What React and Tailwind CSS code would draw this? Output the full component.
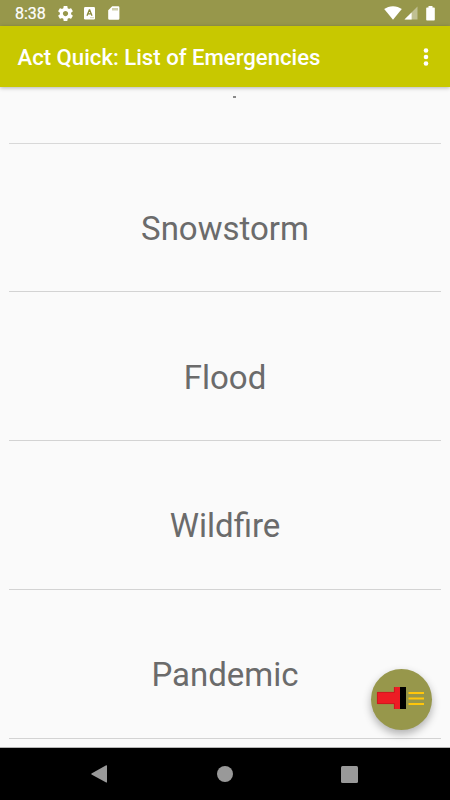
import React from 'react';

const emergencies = ['Snowstorm', 'Flood', 'Wildfire', 'Pandemic'];

const StatusBar = () => (
  <div className="h-[26px] shrink-0 bg-[#97974b] flex items-center text-white">
    <span className="w-[43px] ml-[15px] text-[16px] leading-[26px] pt-[2px] [-webkit-text-stroke:0.2px_white]">8:38</span>
    <svg width="15" height="15" viewBox="2 2 20 20" fill="currentColor">
      <path d="M19.43 12.98c.04-.32.07-.64.07-.98s-.03-.66-.07-.98l2.11-1.65c.19-.15.24-.42.12-.64l-2-3.46c-.12-.22-.39-.3-.61-.22l-2.49 1c-.52-.4-1.08-.73-1.69-.98l-.38-2.65C14.46 2.18 14.25 2 14 2h-4c-.25 0-.46.18-.49.42l-.38 2.65c-.61.25-1.17.59-1.69.98l-2.49-1c-.23-.09-.49 0-.61.22l-2 3.46c-.13.22-.07.49.12.64l2.11 1.65c-.04.32-.07.65-.07.98s.03.66.07.98l-2.11 1.65c-.19.15-.24.42-.12.64l2 3.46c.12.22.39.3.61.22l2.49-1c.52.4 1.08.73 1.69.98l.38 2.65c.03.24.24.42.49.42h4c.25 0 .46-.18.49-.42l.38-2.65c.61-.25 1.17-.59 1.69-.98l2.49 1c.23.09.49 0 .61-.22l2-3.46c.12-.22.07-.49-.12-.64l-2.11-1.65zM12 15.5c-1.93 0-3.5-1.57-3.5-3.5s1.57-3.5 3.5-3.5 3.5 1.57 3.5 3.5-1.57 3.5-3.5 3.5z" />
    </svg>
    <svg width="11" height="13" viewBox="0 0 11 13" className="ml-[11px] mt-px">
      <rect width="11" height="12.5" rx="1.2" fill="white" />
      <path d="M3 8.7 5.3 3h.4L8 8.7M3.9 6.8h3.2" fill="none" stroke="#8b8b3d" strokeWidth="1.3" />
      <path d="M6.5 10.7h1M8.5 10.7h1" stroke="#97974b" strokeWidth="0.8" />
    </svg>
    <svg width="12" height="14" viewBox="0 0 12 14" className="ml-[13px]">
      <path d="M4.2.3h6A1.2 1.2 0 0 1 11.4 1.5v11a1.2 1.2 0 0 1-1.2 1.2H1.4A1.2 1.2 0 0 1 .2 12.5V4.3z" fill="white" />
      <path d="M5 2v2.5M7 2v2.5M9 2v2.5" stroke="#97974b" strokeWidth="0.9" />
    </svg>
    <svg width="18" height="14" viewBox="0 0 18 14" className="ml-auto">
      <path d="M9 13.7.2 3.1C2.6 1.2 5.7.2 9 .2s6.4 1 8.8 2.9z" fill="white" />
    </svg>
    <svg width="14" height="14" viewBox="0 0 14 14" className="ml-[2px]">
      <path d="M13.5.5v13H.5z" fill="white" fillOpacity="0.4" />
      <path d="M7.6 6.4v7.1H.5z" fill="white" />
    </svg>
    <svg width="9" height="15" viewBox="0 0 9 15" className="ml-[8px] mr-[15px]">
      <path d="M2.5 0h4v1.5H8a.8.8 0 0 1 .8.8v11.4a.8.8 0 0 1-.8.8H1a.8.8 0 0 1-.8-.8V2.3A.8.8 0 0 1 1 1.5h1.5z" fill="white" />
    </svg>
  </div>
);

const AppBar = () => (
  <div className="relative z-10 h-[61px] shrink-0 bg-[#c8c800] flex items-center justify-between pl-[17.5px] pr-[21px] text-white shadow-[0_1px_4px_rgba(0,0,0,0.28)]">
    <h1 className="text-[22.15px] font-medium leading-none whitespace-nowrap pt-[2px]">
      Act Quick: List of Emergencies
    </h1>
    <svg width="6" height="20" viewBox="0 0 6 20" fill="currentColor">
      <circle cx="3" cy="3.5" r="2.3" />
      <circle cx="3" cy="10" r="2.3" />
      <circle cx="3" cy="16.5" r="2.3" />
    </svg>
  </div>
);

const FlashlightButton = () => (
  <button className="absolute right-[18px] bottom-[17px] w-[61px] h-[61px] rounded-full bg-[#97974b] flex items-center justify-center shadow-[0_4px_9px_rgba(0,0,0,0.3)]">
    <svg width="49" height="24" viewBox="0 0 49 24" className="-ml-[2px] -mt-[3px]">
      <path d="M1 6h17V1h6v22h-6v-5H1z" fill="#ed1c24" />
      <path d="M1.4 6.4H18.4V1M1.4 6.4V17.6H18.4V23" fill="none" stroke="#c4161d" strokeWidth="0.8" />
      <path d="M24 1h6v22h-6z" fill="black" />
      <path d="M32.5 7H48M32.5 12.5H48M32.5 18H48" stroke="#ffc60a" strokeWidth="2" />
    </svg>
  </button>
);

const NavBar = () => (
  <div className="h-[52px] shrink-0 bg-black flex items-center justify-between pl-[91px] pr-[92px] text-[#999999]">
    <svg width="16" height="18" viewBox="0 0 16 18" fill="currentColor">
      <path d="M15.2.3q.8-.2.8.7v16q0 .9-.8.5L.5 9.5Q0 9 .5 8.5z" />
    </svg>
    <div className="w-4 h-4 ml-px rounded-full bg-[#999999]" />
    <div className="w-[17px] h-[17px] rounded-[1.5px] bg-[#999999]" />
  </div>
);

const App = () => (
  <div className="w-[450px] h-[800px] overflow-hidden flex flex-col bg-[#fafafa] font-[Roboto,sans-serif]">
    <StatusBar />
    <AppBar />
    <div className="relative flex-1 min-h-0 overflow-hidden px-[9px] border-b border-[#b5b5b5]">
      {/* Tail of the row scrolled under the app bar */}
      <div className="h-[56.5px] pt-[9px] pl-[224px] border-b border-[#d8d8d8]">
        <div className="w-[3px] h-[2px] bg-[#8a8a8a]" />
      </div>
      {emergencies.map((name) => (
        <div
          key={name}
          className="h-[148.8px] flex items-center justify-center border-b border-[#d3d3d3] text-[33px] leading-none text-[#6b6b6b] pt-[22px]"
        >
          {name}
        </div>
      ))}
      <FlashlightButton />
    </div>
    <NavBar />
  </div>
);

export default App;
